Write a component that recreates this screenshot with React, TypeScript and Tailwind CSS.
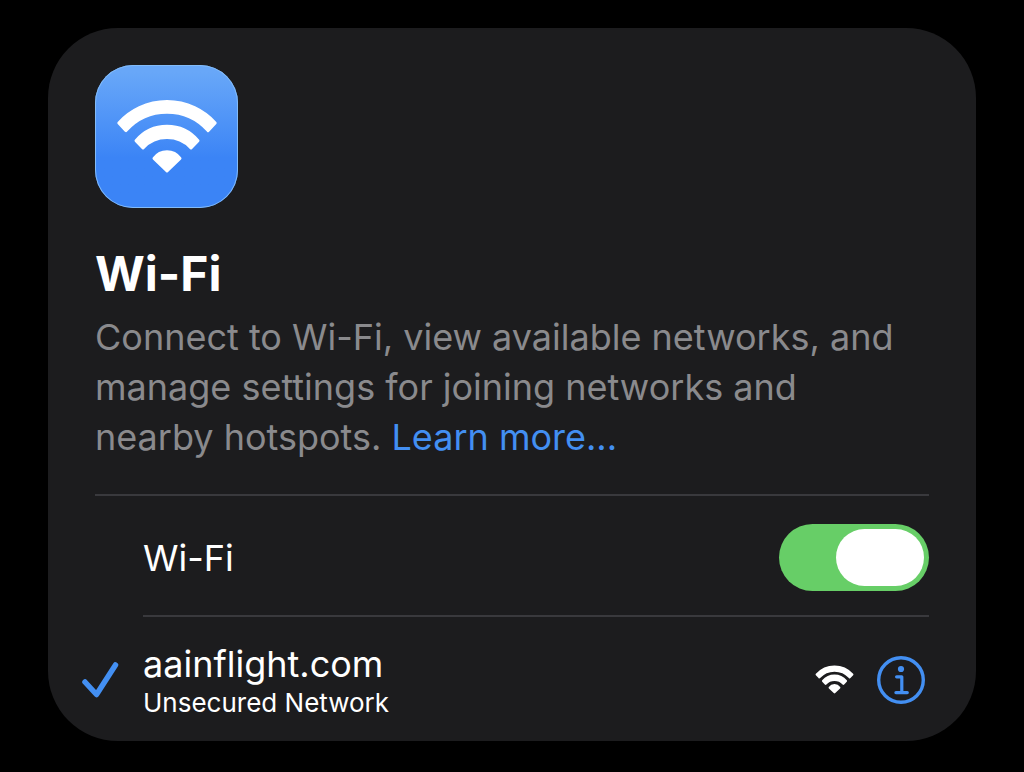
type Network = {
  name: string;
  note: string;
  connected: boolean;
};

const networks: Network[] = [
  { name: "aainflight.com", note: "Unsecured Network", connected: true },
];

// Wi-Fi fan: two arcs and a wedge, the stroke rounds the corners.
function WifiGlyph({ className, weight = 3 }: { className?: string; weight?: number }) {
  return (
    <svg
      viewBox="0 0 100 74"
      className={className}
      fill="currentColor"
      stroke="currentColor"
      strokeWidth={weight}
      strokeLinejoin="round"
      overflow="visible"
      aria-hidden="true"
    >
      <path d="M1.8 23A65 65 0 0 1 98.2 23L91 30.6A55 55 0 0 0 9 30.6Z" />
      <path d="M19 40.6A40.5 40.5 0 0 1 81 40.6L74 47.9A33 33 0 0 0 26 47.9Z" />
      <path d="M37 58.4A16 16 0 0 1 63 58.4L50 71Z" />
    </svg>
  );
}

function CheckGlyph() {
  return (
    <svg viewBox="0 0 38 38" className="w-[38px] shrink-0" fill="none" aria-hidden="true">
      <path
        d="M4 21 15.5 33.5 34.5 4"
        stroke="#438ff2"
        strokeWidth="5.5"
        strokeLinecap="round"
        strokeLinejoin="round"
      />
    </svg>
  );
}

function InfoGlyph() {
  return (
    <svg viewBox="0 0 48 48" className="w-12" fill="none" stroke="#438ff2" aria-hidden="true">
      <circle cx="24" cy="24" r="22.3" strokeWidth="3.4" />
      <circle cx="24" cy="13" r="3.1" fill="#438ff2" stroke="none" />
      <path
        d="M19.6 20.8H24.8V36.6M18.9 36.6H30.3"
        strokeWidth="3.2"
        strokeLinecap="round"
        strokeLinejoin="round"
      />
    </svg>
  );
}

function AppIcon() {
  return (
    <div className="flex size-[143px] items-center justify-center rounded-[38px] bg-linear-to-b from-[#68a7f8] from-5% to-[#3b84f6] to-65% text-white inset-ring-1 inset-ring-[#82bbf8]">
      <WifiGlyph className="w-[100px]" />
    </div>
  );
}

function NetworkRow({ network }: { network: Network }) {
  return (
    <li className="-ml-3.5 flex items-center pt-6 pr-1 pb-[22px]">
      {network.connected && <CheckGlyph />}
      <div className="ml-6 flex-1">
        <p className="text-[36px] leading-[46px]">{network.name}</p>
        <p className="text-[26px] leading-8">{network.note}</p>
      </div>
      <WifiGlyph className="w-[37px]" weight={6} />
      <button type="button" aria-label="Network details" className="ml-6">
        <InfoGlyph />
      </button>
    </li>
  );
}

export default function App() {
  return (
    <main className="min-h-screen bg-black px-12 py-7 font-['Inter','Liberation_Sans',sans-serif] text-white">
      <section className="rounded-[70px] bg-[#1c1c1e] px-[47px] pt-[37px]">
        <AppIcon />
        <h1 className="mt-9 text-[48px] leading-[60px] font-bold">Wi-Fi</h1>
        <p className="mt-2 pr-6 text-[36px] leading-[50px] text-[#8a8a8d]">
          Connect to Wi-Fi, view available networks, and manage settings for joining networks and
          nearby hotspots.{" "}
          <a href="#learn-more" className="text-[#438ff2]">
            Learn more...
          </a>
        </p>

        <div className="mt-8 border-t-2 border-[#39393d]">
          <div className="ml-12 flex items-center justify-between border-b-2 border-[#39393d] pt-7 pb-6">
            <label htmlFor="wifi" className="text-[36px] leading-[50px]">
              Wi-Fi
            </label>
            <input
              id="wifi"
              type="checkbox"
              role="switch"
              defaultChecked
              className="flex h-[67px] w-[150px] appearance-none items-center rounded-full bg-[#39393d] p-[5px] before:h-[57px] before:w-[88px] before:rounded-full before:bg-white checked:justify-end checked:bg-[#67ce67]"
            />
          </div>
          <ul>
            {networks.map((network) => (
              <NetworkRow key={network.name} network={network} />
            ))}
          </ul>
        </div>
      </section>
    </main>
  );
}
